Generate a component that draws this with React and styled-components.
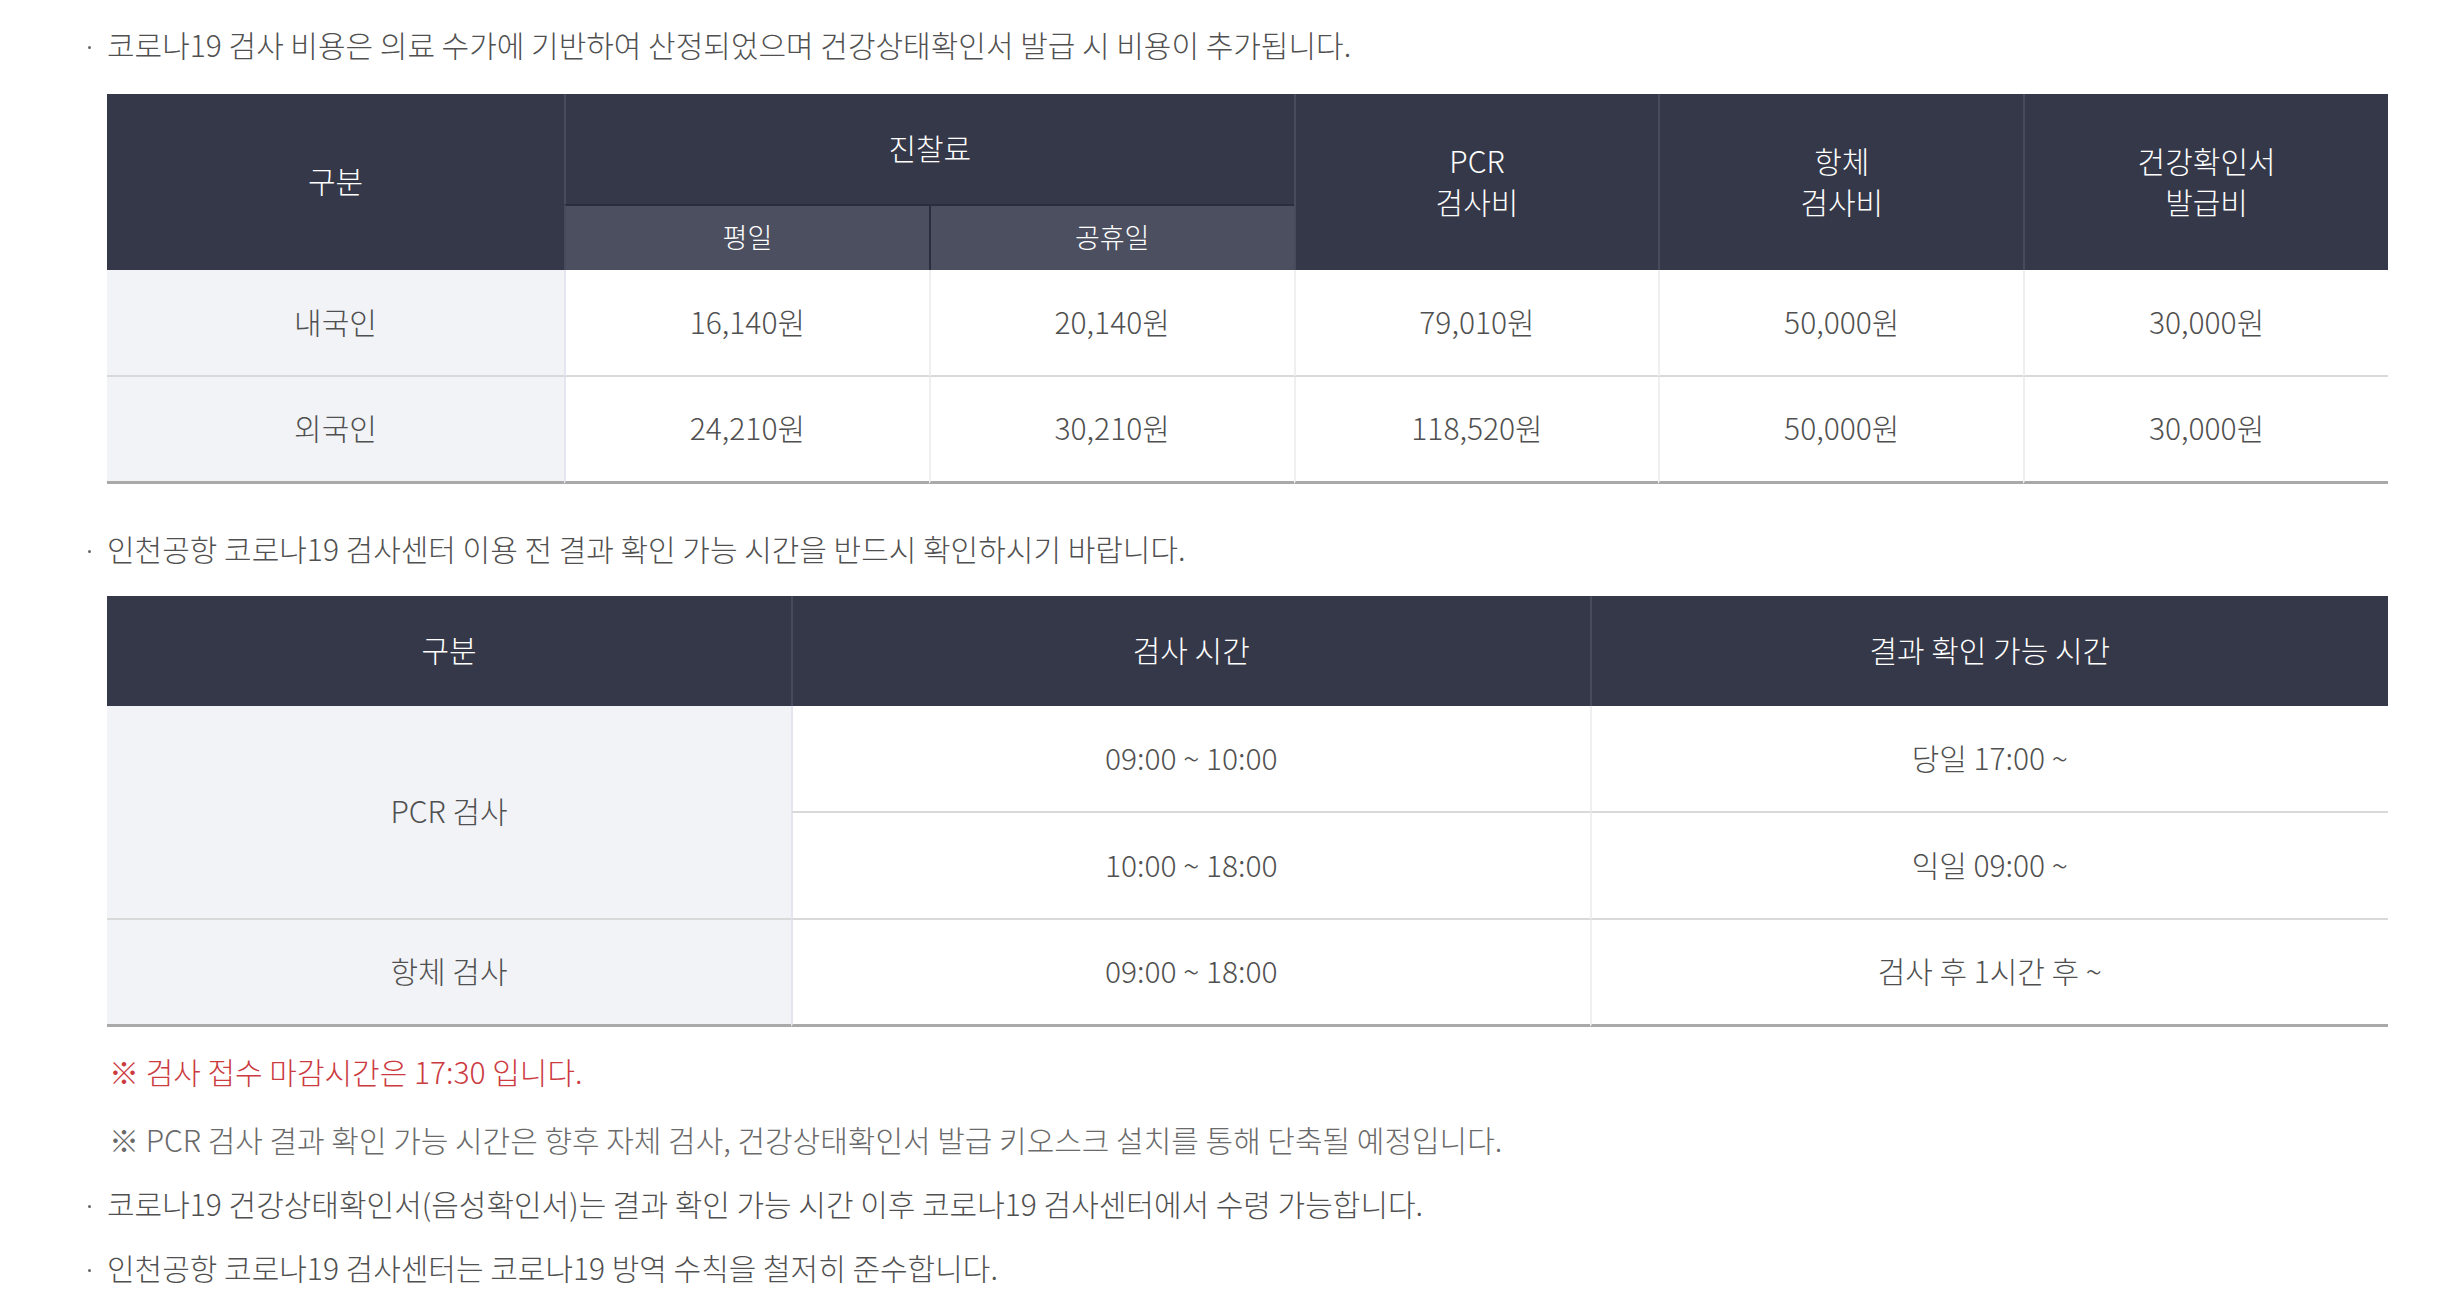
import React from "react";
import styled, { createGlobalStyle } from "styled-components";

const Global = createGlobalStyle`
  html, body { margin: 0; padding: 0; background: #ffffff; }
  body {
    font-family: "Noto Sans CJK KR", "Noto Sans", sans-serif;
    font-weight: 300;
    color: #4a4a4a;
  }
`;

const Page = styled.div`
  width: 2441px;
  box-sizing: border-box;
  padding: 24px 53px 20px 107px;
  display: flex;
  flex-direction: column;
`;

const Bullet = styled.p`
  margin: ${(p) => p.$mt || 0}px 0 0 -20px;
  display: flex;
  align-items: center;
  font-size: 30px;
  line-height: 40px;
  letter-spacing: 0;
  color: #505050;
`;

const Dot = styled.span`
  width: 20px;
  flex: none;
  display: flex;
  justify-content: flex-start;
  padding-left: 1px;
  box-sizing: border-box;
  &::before {
    content: "";
    width: 3px;
    height: 3px;
    border-radius: 50%;
    background: #666;
    margin-top: 6px;
  }
`;

const Note = styled.p`
  margin: ${(p) => p.$mt || 0}px 0 0 2px;
  font-size: 30px;
  line-height: 40px;
  letter-spacing: 0;
  color: ${(p) => (p.$red ? "#cc3b3f" : "#6a6a6a")};
`;

const Grid = styled.div`
  margin-top: ${(p) => p.$mt}px;
  width: 2281px;
  display: grid;
  grid-template-columns: ${(p) => p.$cols};
  grid-template-rows: ${(p) => p.$rows};
`;

const Head = styled.div`
  background: #353848;
  color: #ffffff;
  display: flex;
  align-items: center;
  justify-content: center;
  text-align: center;
  font-size: 30px;
  line-height: 41px;
  padding-bottom: 3px;
  box-sizing: border-box;
  border-left: ${(p) => (p.$first ? "none" : "2px solid #484b5b")};
  grid-row: ${(p) => p.$row};
  grid-column: ${(p) => p.$col};
`;

const SubHead = styled.div`
  background: #4c4f5f;
  color: #ffffff;
  display: flex;
  align-items: center;
  justify-content: center;
  font-size: 27px;
  padding-bottom: 4px;
  box-sizing: border-box;
  border-top: 2px solid #2a2d3b;
  border-left: 2px solid ${(p) => (p.$dark ? "#2a2d3b" : "#484b5b")};
  grid-row: 2;
  grid-column: ${(p) => p.$col};
`;

const Cell = styled.div`
  display: flex;
  align-items: center;
  justify-content: center;
  text-align: center;
  font-size: 30px;
  padding-bottom: 4px;
  color: #505050;
  box-sizing: border-box;
  background: ${(p) => (p.$label ? "#f2f3f7" : "#ffffff")};
  border-left: ${(p) =>
    p.$label ? "none" : p.$afterLabel ? "2px solid #e4e5ef" : "2px solid #efeff1"};
  border-bottom: ${(p) => (p.$last ? "3px solid #a9a9a9" : "2px solid #d9d9d9")};
  grid-row: ${(p) => p.$row || "auto"};
  grid-column: ${(p) => p.$col || "auto"};
`;

const costRows = [
  ["내국인", "16,140원", "20,140원", "79,010원", "50,000원", "30,000원"],
  ["외국인", "24,210원", "30,210원", "118,520원", "50,000원", "30,000원"],
];

export default function App() {
  return (
    <>
      <Global />
      <Page>
        <Bullet>
          <Dot />
          코로나19 검사 비용은 의료 수가에 기반하여 산정되었으며 건강상태확인서 발급 시 비용이 추가됩니다.
        </Bullet>

        <Grid $mt={30} $cols="457px repeat(5, 1fr)" $rows="110px 66px 107px 107px">
          <Head $first $row="1 / span 2" $col="1">구분</Head>
          <Head $row="1" $col="2 / span 2">진찰료</Head>
          <Head $row="1 / span 2" $col="4">
            PCR
            <br />
            검사비
          </Head>
          <Head $row="1 / span 2" $col="5">
            항체
            <br />
            검사비
          </Head>
          <Head $row="1 / span 2" $col="6">
            건강확인서
            <br />
            발급비
          </Head>
          <SubHead $col="2">평일</SubHead>
          <SubHead $col="3" $dark>공휴일</SubHead>
          {costRows.map((r, i) =>
            r.map((v, j) => (
              <Cell
                key={`${i}-${j}`}
                $row={`${i + 3}`}
                $col={`${j + 1}`}
                $label={j === 0}
                $afterLabel={j === 1}
                $last={i === costRows.length - 1}
              >
                {v}
              </Cell>
            ))
          )}
        </Grid>

        <Bullet $mt={44}>
          <Dot />
          인천공항 코로나19 검사센터 이용 전 결과 확인 가능 시간을 반드시 확인하시기 바랍니다.
        </Bullet>

        <Grid $mt={28} $cols="684px 1fr 1fr" $rows="110px 107px 107px 107px">
          <Head $first $row="1" $col="1">구분</Head>
          <Head $row="1" $col="2">검사 시간</Head>
          <Head $row="1" $col="3">결과 확인 가능 시간</Head>

          <Cell $label $row="2 / span 2" $col="1">PCR 검사</Cell>
          <Cell $afterLabel $row="2" $col="2">09:00 ~ 10:00</Cell>
          <Cell $row="2" $col="3">당일 17:00 ~</Cell>
          <Cell $afterLabel $row="3" $col="2">10:00 ~ 18:00</Cell>
          <Cell $row="3" $col="3">익일 09:00 ~</Cell>

          <Cell $label $last $row="4" $col="1">항체 검사</Cell>
          <Cell $afterLabel $last $row="4" $col="2">09:00 ~ 18:00</Cell>
          <Cell $last $row="4" $col="3">검사 후 1시간 후 ~</Cell>
        </Grid>

        <Note $red $mt={24}>※ 검사 접수 마감시간은 17:30 입니다.</Note>
        <Note $mt={28}>
          ※ PCR 검사 결과 확인 가능 시간은 향후 자체 검사, 건강상태확인서 발급 키오스크 설치를 통해 단축될 예정입니다.
        </Note>
        <Bullet $mt={24}>
          <Dot />
          코로나19 건강상태확인서(음성확인서)는 결과 확인 가능 시간 이후 코로나19 검사센터에서 수령 가능합니다.
        </Bullet>
        <Bullet $mt={24}>
          <Dot />
          인천공항 코로나19 검사센터는 코로나19 방역 수칙을 철저히 준수합니다.
        </Bullet>
      </Page>
    </>
  );
}
